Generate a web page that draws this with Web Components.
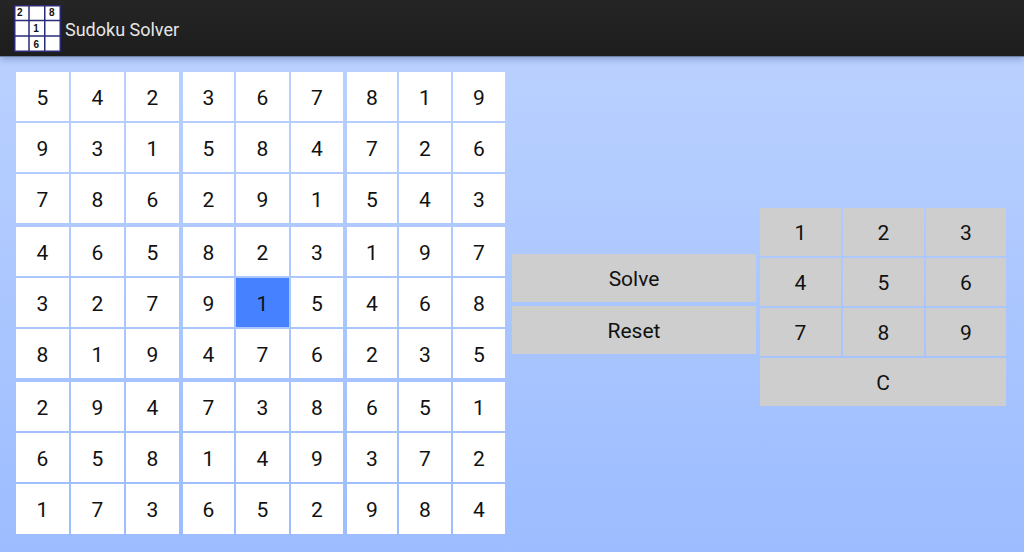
<!DOCTYPE html>
<html>
<head>
<meta charset="utf-8">
<title>Sudoku Solver</title>
<style>
  html, body { margin: 0; height: 100%; }
  body { font-family: Roboto, "Liberation Sans", sans-serif; overflow: hidden; }
</style>
</head>
<body>
<sudoku-app></sudoku-app>
<script>
class AppBar extends HTMLElement {
  constructor() {
    super();
    this.attachShadow({ mode: 'open' });
    this.shadowRoot.innerHTML = `
    <style>
      :host {
        display: flex;
        align-items: center;
        box-sizing: border-box;
        height: 57px;
        padding-left: 14px;
        background: linear-gradient(#252525, #1d1d1d);
        border-bottom: 1px solid #6f80a6;
        box-shadow: 0 2px 7px rgba(40, 60, 110, 0.35);
        position: relative;
        z-index: 1;
      }
      svg { display: block; margin-top: 1px; }
      text { font: bold 10px "Liberation Sans", sans-serif; fill: #111; text-anchor: middle; }
      span { margin: 2px 0 0 4px; color: #e6e6e6; font-size: 18px; }
    </style>
    <svg width="47" height="47" viewBox="0 0 47 47">
      <rect x="0.5" y="0.5" width="46" height="46" fill="#fff"/>
      <path d="M0.75 0V47M15 0V47M30.75 0V47M46.25 0V47M0 0.75H47M0 15.5H47M0 31H47M0 46.25H47" stroke="#2b2b78" stroke-width="1.5" fill="none"/>
      <text x="5.7" y="11">2</text>
      <text x="37.7" y="11">8</text>
      <text x="22" y="26.7">1</text>
      <text x="22.3" y="42.7">6</text>
    </svg>
    <span><slot></slot></span>`;
  }
}

class SudokuCell extends HTMLElement {
  constructor() {
    super();
    this.attachShadow({ mode: 'open' });
    this.shadowRoot.innerHTML = `
    <style>
      :host {
        display: flex;
        align-items: center;
        justify-content: center;
        padding-top: 2px;
        box-sizing: border-box;
        background: #fff;
        color: #111;
        font-size: 21px;
      }
      :host([selected]) { background: #4682ff; }
    </style>
    <slot></slot>`;
  }
}

// one 3x3 block, track sizes come in from the board
class SudokuBox extends HTMLElement {
  constructor() {
    super();
    this.attachShadow({ mode: 'open' });
    this.shadowRoot.innerHTML = `
    <style>
      :host {
        display: grid;
        grid-template-columns: var(--cols);
        grid-template-rows: var(--rows);
        gap: 2px;
      }
    </style>
    <slot></slot>`;
  }
}

class SudokuBoard extends HTMLElement {
  constructor() {
    super();
    this.attachShadow({ mode: 'open' });
    this.shadowRoot.innerHTML = `
    <style>
      :host {
        display: grid;
        grid-template-columns: repeat(3, auto);
        gap: 4px;
        flex: none;
        align-self: flex-start;
      }
    </style>
    <slot></slot>`;
  }

  connectedCallback() {
    const values = [
      '542367819', '931584726', '786291543',
      '465823197', '327915468', '819476235',
      '294738651', '658149372', '173652984'
    ];
    const cols = ['53px 53px 53px', '51px 53px 52px', '50px 52px 52px'];
    for (let b = 0; b < 9; b++) {
      const box = document.createElement('sudoku-box');
      const bx = b % 3, by = Math.floor(b / 3);
      box.style.setProperty('--cols', cols[bx]);
      box.style.setProperty('--rows', by === 2 ? '49px 49px 50px' : '49px 49px 49px');
      for (let i = 0; i < 9; i++) {
        const r = by * 3 + Math.floor(i / 3);
        const c = bx * 3 + i % 3;
        const cell = document.createElement('sudoku-cell');
        cell.textContent = values[r][c];
        if (r === 4 && c === 4) cell.setAttribute('selected', '');
        box.appendChild(cell);
      }
      this.appendChild(box);
    }
  }
}

class GreyButton extends HTMLElement {
  constructor() {
    super();
    this.attachShadow({ mode: 'open' });
    this.shadowRoot.innerHTML = `
    <style>
      :host {
        display: flex;
        align-items: center;
        justify-content: center;
        box-sizing: border-box;
        height: 48px;
        padding-top: 2px;
        background: #cecece;
        color: #111;
        font-size: 21px;
      }
    </style>
    <slot></slot>`;
  }
}

class ActionPanel extends HTMLElement {
  constructor() {
    super();
    this.attachShadow({ mode: 'open' });
    this.shadowRoot.innerHTML = `
    <style>
      :host {
        display: grid;
        gap: 4px;
        flex: none;
        width: 244px;
        margin: 2px 0 0 7px;
      }
    </style>
    <slot></slot>`;
  }
}

class NumberPad extends HTMLElement {
  constructor() {
    super();
    this.attachShadow({ mode: 'open' });
    this.shadowRoot.innerHTML = `
    <style>
      :host {
        display: grid;
        grid-template-columns: 81px 81px 80px;
        gap: 2px;
        flex: none;
        margin: 8px 0 0 4px;
      }
      ::slotted(:last-child) { grid-column: 1 / -1; }
    </style>
    <slot></slot>`;
  }
}

class SudokuApp extends HTMLElement {
  constructor() {
    super();
    this.attachShadow({ mode: 'open' });
    this.shadowRoot.innerHTML = `
    <style>
      :host { display: block; height: 552px; }
      main {
        box-sizing: border-box;
        display: flex;
        align-items: center;
        height: 495px;
        padding: 15px 18px 18px 16px;
        background: linear-gradient(#bad1ff, #9cbcff);
      }
    </style>
    <app-bar>Sudoku Solver</app-bar>
    <main>
      <sudoku-board></sudoku-board>
      <action-panel>
        <grey-button>Solve</grey-button>
        <grey-button>Reset</grey-button>
      </action-panel>
      <number-pad>
        <grey-button>1</grey-button>
        <grey-button>2</grey-button>
        <grey-button>3</grey-button>
        <grey-button>4</grey-button>
        <grey-button>5</grey-button>
        <grey-button>6</grey-button>
        <grey-button>7</grey-button>
        <grey-button>8</grey-button>
        <grey-button>9</grey-button>
        <grey-button>C</grey-button>
      </number-pad>
    </main>`;
  }
}

customElements.define('app-bar', AppBar);
customElements.define('sudoku-cell', SudokuCell);
customElements.define('sudoku-box', SudokuBox);
customElements.define('sudoku-board', SudokuBoard);
customElements.define('grey-button', GreyButton);
customElements.define('action-panel', ActionPanel);
customElements.define('number-pad', NumberPad);
customElements.define('sudoku-app', SudokuApp);
</script>
</body>
</html>
